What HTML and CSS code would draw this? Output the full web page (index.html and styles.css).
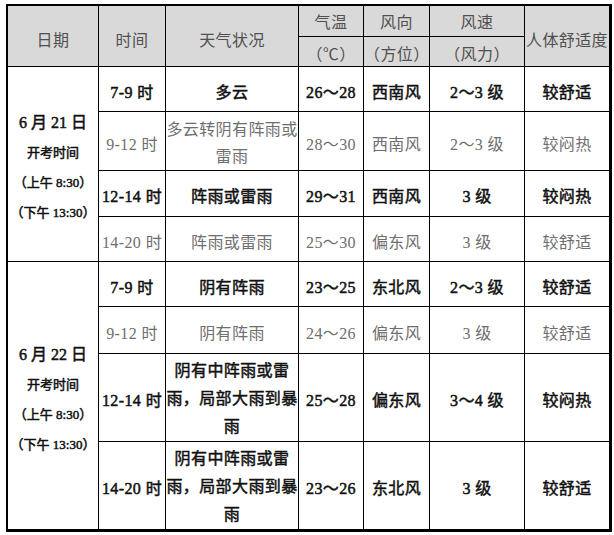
FILE: index.html
```html
<!DOCTYPE html>
<html lang="zh-CN">
<head>
<meta charset="utf-8">
<title>高考天气</title>
<link rel="stylesheet" href="styles.css">
</head>
<body>
<table class="weather">
  <colgroup>
    <col class="c-date"><col class="c-time"><col class="c-cond"><col class="c-temp"><col class="c-dir"><col class="c-speed"><col class="c-comf">
  </colgroup>
  <thead>
    <tr class="h1">
      <th rowspan="2" class="hspan">日期</th>
      <th rowspan="2" class="hspan">时间</th>
      <th rowspan="2" class="hspan">天气状况</th>
      <th>气温</th>
      <th>风向</th>
      <th>风速</th>
      <th rowspan="2" class="hspan">人体舒适度</th>
    </tr>
    <tr class="h2">
      <th>（℃）</th>
      <th>（方位）</th>
      <th>（风力）</th>
    </tr>
  </thead>
  <tbody>
    <tr class="r1 strong">
      <td rowspan="4" class="date">
        <div class="d-main">6 月 21 日</div>
        <div class="d-sub">开考时间</div>
        <div class="d-sub">（上午 8:30）</div>
        <div class="d-sub">（下午 13:30）</div>
      </td>
      <td>7-9 时</td><td>多云</td><td>26～28</td><td>西南风</td><td>2～3 级</td><td>较舒适</td>
    </tr>
    <tr class="r2 muted">
      <td>9-12 时</td><td class="two">多云转阴有阵雨或<br>雷雨</td><td>28～30</td><td>西南风</td><td>2～3 级</td><td>较闷热</td>
    </tr>
    <tr class="r3 strong">
      <td>12-14 时</td><td>阵雨或雷雨</td><td>29～31</td><td>西南风</td><td>3 级</td><td>较闷热</td>
    </tr>
    <tr class="r4 muted">
      <td>14-20 时</td><td>阵雨或雷雨</td><td>25～30</td><td>偏东风</td><td>3 级</td><td>较舒适</td>
    </tr>
    <tr class="r5 strong">
      <td rowspan="4" class="date">
        <div class="d-main">6 月 22 日</div>
        <div class="d-sub">开考时间</div>
        <div class="d-sub">（上午 8:30）</div>
        <div class="d-sub">（下午 13:30）</div>
      </td>
      <td>7-9 时</td><td>阴有阵雨</td><td>23～25</td><td>东北风</td><td>2～3 级</td><td>较舒适</td>
    </tr>
    <tr class="r6 muted">
      <td>9-12 时</td><td>阴有阵雨</td><td>24～26</td><td>偏东风</td><td>3 级</td><td>较舒适</td>
    </tr>
    <tr class="r7 strong">
      <td>12-14 时</td><td class="three">阴有中阵雨或雷<br>雨，局部大雨到暴<br>雨</td><td>25～28</td><td>偏东风</td><td>3～4 级</td><td>较闷热</td>
    </tr>
    <tr class="r8 strong">
      <td>14-20 时</td><td class="three">阴有中阵雨或雷<br>雨，局部大雨到暴<br>雨</td><td>23～26</td><td>东北风</td><td>3 级</td><td>较舒适</td>
    </tr>
  </tbody>
</table>
</body>
</html>
```

FILE: styles.css
```css
html, body {
  margin: 0;
  padding: 0;
  background: #ffffff;
}

.weather {
  margin: 4px 0 0 6px;
  width: 606px;
  table-layout: fixed;
  border-collapse: separate;
  border-spacing: 0;
  border: 2px solid #000;
  font-family: "Liberation Serif", "Noto Sans CJK SC", serif;
  font-size: 16px;
  letter-spacing: 0.4px;
}

.c-date { width: 91px; }
.c-time { width: 67px; }
.c-cond { width: 133px; }
.c-temp { width: 65px; }
.c-dir { width: 66px; }
.c-speed { width: 95px; }
.c-comf { width: 85px; }

.weather th,
.weather td {
  border-right: 1px solid #000;
  border-bottom: 1px solid #000;
  text-align: center;
  vertical-align: middle;
  white-space: nowrap;
  padding: 7px 0 0;
  line-height: 22px;
}

.weather th {
  background: #d9d9d9;
  color: #505050;
  font-weight: normal;
}

.h1 { height: 31px; }
.h2 { height: 30px; }
.h1 th { padding-top: 3px; }
.h1 th.hspan { padding-top: 10px; }
.h2 th { padding-top: 6px; }

.r1 { height: 45px; }
.r2 { height: 59px; }
.r3 { height: 46px; }
.r4 { height: 45px; }
.r5 { height: 45px; }
.r6 { height: 47px; }
.r7 { height: 88px; }
.r8 { height: 88px; }

.strong td {
  color: #111;
  font-weight: normal;
  -webkit-text-stroke: 0.5px #111;
}

.muted td {
  color: #6e6e6e;
  font-weight: normal;
}

.weather td.two {
  line-height: 27px;
  padding-top: 4px;
}

.weather td.three {
  line-height: 28px;
  padding-top: 3px;
}

.weather td.date {
  color: #111;
  font-weight: normal;
  -webkit-text-stroke: 0.5px #111;
  letter-spacing: 0;
  padding-top: 8px;
}

.d-main {
  font-size: 16px;
  line-height: 30px;
}

.d-sub {
  font-size: 13px;
  line-height: 30px;
}
```
